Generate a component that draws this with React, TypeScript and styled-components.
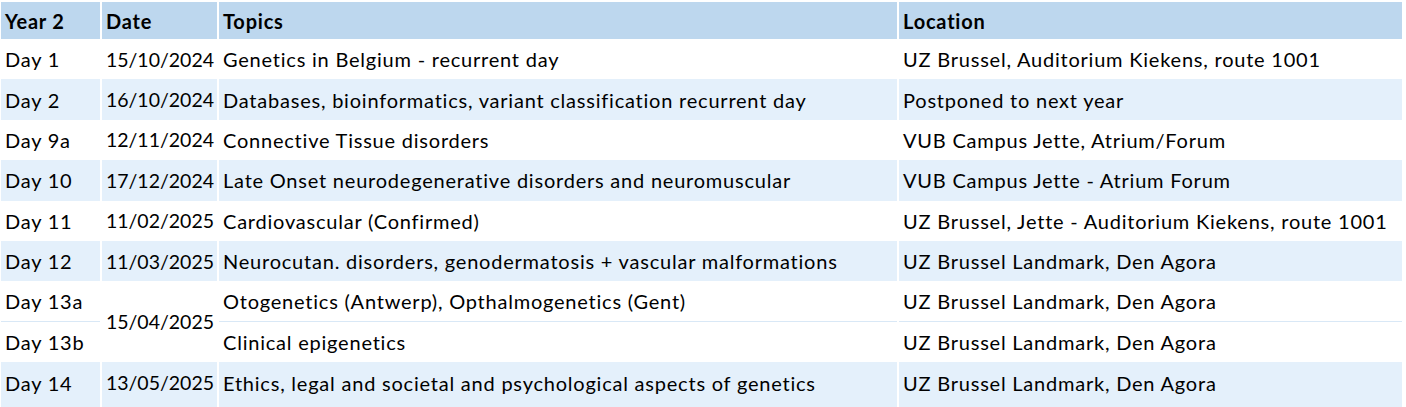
import React from "react";
import styled, { createGlobalStyle } from "styled-components";

const Global = createGlobalStyle`
  html, body { margin: 0; padding: 0; background: #ffffff; }
  body { font-family: Lato, "Open Sans", sans-serif; color: #000; }
`;

const Table = styled.table`
  margin: 2px 0 0 1px;
  width: 1401px;
  table-layout: fixed;
  border-collapse: collapse;
  font-family: Lato, "Noto Sans", sans-serif;
  font-size: 20px;
  letter-spacing: 0.78px;
`;

const Row = styled.tr<{ $shade?: boolean; $split?: boolean; $last?: boolean }>`
  height: ${(p) => (p.$last ? "46px" : "40.4px")};
  background: ${(p) => (p.$shade ? "#E4F0FB" : "#ffffff")};
  & > td {
    border-top: ${(p) => (p.$split ? "1px solid #D9E8F6" : "0")};
    padding-bottom: ${(p) => (p.$last ? "5px" : "0")};
  }
`;

const HeadRow = styled.tr`
  height: 37px;
  background: #BDD7EE;
`;

const Th = styled.th`
  text-align: left;
  font-weight: 700;
  padding: 0 0 0 4px;
  border-left: 2px solid #ffffff;
  &:first-child { border-left: 0; }
  white-space: nowrap;
`;

const Td = styled.td`
  text-align: left;
  padding-left: 4px;
  padding-top: 0;
  border-left: 2px solid #ffffff;
  &:first-child { border-left: 0; }
  white-space: nowrap;
  vertical-align: middle;
`;

const DateTd = styled(Td)`
  text-align: right;
  padding-left: 0;
  padding-right: 3px;
  letter-spacing: 0;
  font-size: 19.5px;
`;

type Item = {
  day: string;
  date?: string;
  topic: string;
  loc: string;
  span?: number;
  split?: boolean;
  shade?: boolean;
};

const items: Item[] = [
  { day: "Day 1", date: "15/10/2024", topic: "Genetics in Belgium - recurrent day", loc: "UZ Brussel, Auditorium Kiekens, route 1001" },
  { day: "Day 2", date: "16/10/2024", topic: "Databases, bioinformatics, variant classification recurrent day", loc: "Postponed to next year", shade: true },
  { day: "Day 9a", date: "12/11/2024", topic: "Connective Tissue disorders", loc: "VUB Campus Jette, Atrium/Forum" },
  { day: "Day 10", date: "17/12/2024", topic: "Late Onset neurodegenerative disorders and neuromuscular", loc: "VUB Campus Jette - Atrium Forum", shade: true },
  { day: "Day 11", date: "11/02/2025", topic: "Cardiovascular (Confirmed)", loc: "UZ Brussel, Jette - Auditorium Kiekens, route 1001" },
  { day: "Day 12", date: "11/03/2025", topic: "Neurocutan. disorders, genodermatosis + vascular malformations", loc: "UZ Brussel Landmark, Den Agora", shade: true },
  { day: "Day 13a", date: "15/04/2025", span: 2, topic: "Otogenetics (Antwerp), Opthalmogenetics (Gent)", loc: "UZ Brussel Landmark, Den Agora" },
  { day: "Day 13b", topic: "Clinical epigenetics", loc: "UZ Brussel Landmark, Den Agora", split: true },
  { day: "Day 14", date: "13/05/2025", topic: "Ethics, legal and societal and psychological aspects of genetics", loc: "UZ Brussel Landmark, Den Agora", shade: true },
];

export default function App() {
  return (
    <>
      <Global />
      <Table>
        <colgroup>
          <col style={{ width: 100 }} />
          <col style={{ width: 117 }} />
          <col style={{ width: 680 }} />
          <col style={{ width: 504 }} />
        </colgroup>
        <thead>
          <HeadRow>
            <Th>Year 2</Th>
            <Th>Date</Th>
            <Th>Topics</Th>
            <Th>Location</Th>
          </HeadRow>
        </thead>
        <tbody>
          {items.map((it, i) => (
            <Row key={it.day} $shade={it.shade} $split={it.split} $last={i === items.length - 1}>
              <Td>{it.day}</Td>
              {it.date && <DateTd rowSpan={it.span}>{it.date}</DateTd>}
              <Td>{it.topic}</Td>
              <Td>{it.loc}</Td>
            </Row>
          ))}
        </tbody>
      </Table>
    </>
  );
}
